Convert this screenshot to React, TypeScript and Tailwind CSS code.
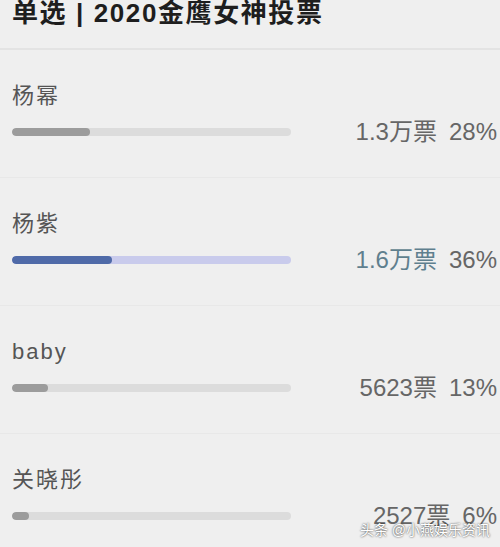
const rows = [
  { name: "杨幂", votes: "1.3万票", pct: "28%", fill: 28, active: false },
  { name: "杨紫", votes: "1.6万票", pct: "36%", fill: 36, active: true },
  { name: "baby", votes: "5623票", pct: "13%", fill: 13, active: false },
  { name: "关晓彤", votes: "2527票", pct: "6%", fill: 6, active: false },
];

const font = {
  fontFamily: '"Liberation Sans", "Noto Sans CJK SC", sans-serif',
};

export default function App() {
  return (
    <div
      className="relative w-[500px] h-[547px] overflow-hidden bg-[#efefef]"
      style={font}
    >
      <div className="h-[50px] border-b-2 border-[#e3e3e3] px-3">
        <h1 className="text-[26px] leading-[26px] font-bold text-[#1e1e1e] tracking-[1.6px]">
          单选 | 2020金鹰女神投票
        </h1>
      </div>

      {rows.map((row, i) => (
        <div
          key={row.name}
          className={
            "h-[128px] pt-[34px] pl-3 pr-[3px] " +
            (i < rows.length - 1 ? "border-b border-[#e8e8e8]" : "")
          }
        >
          <div className="text-[22px] leading-6 text-[#555] tracking-[2px]">
            {row.name}
          </div>
          <div className="mt-3 flex h-6 items-center justify-between">
            <div
              className={
                "h-2 w-[279px] rounded-full overflow-hidden " +
                (row.active ? "bg-[#c9cbec]" : "bg-[#dcdcdc]")
              }
            >
              <div
                className={
                  "h-full rounded-full " +
                  (row.active ? "bg-[#4f6aa8]" : "bg-[#9c9c9c]")
                }
                style={{ width: `${row.fill}%` }}
              />
            </div>
            <div className="flex items-center text-[24px] leading-6 text-[#666]">
              <span className={row.active ? "text-[#5f7f8e]" : ""}>
                {row.votes}
              </span>
              <span className="ml-3">{row.pct}</span>
            </div>
          </div>
        </div>
      ))}

      <div className="absolute right-[10px] bottom-[9px] text-[14px] leading-4 text-white [text-shadow:0_0_2px_rgba(0,0,0,0.9)]">
        头条 @小燕娱乐资讯
      </div>
    </div>
  );
}
